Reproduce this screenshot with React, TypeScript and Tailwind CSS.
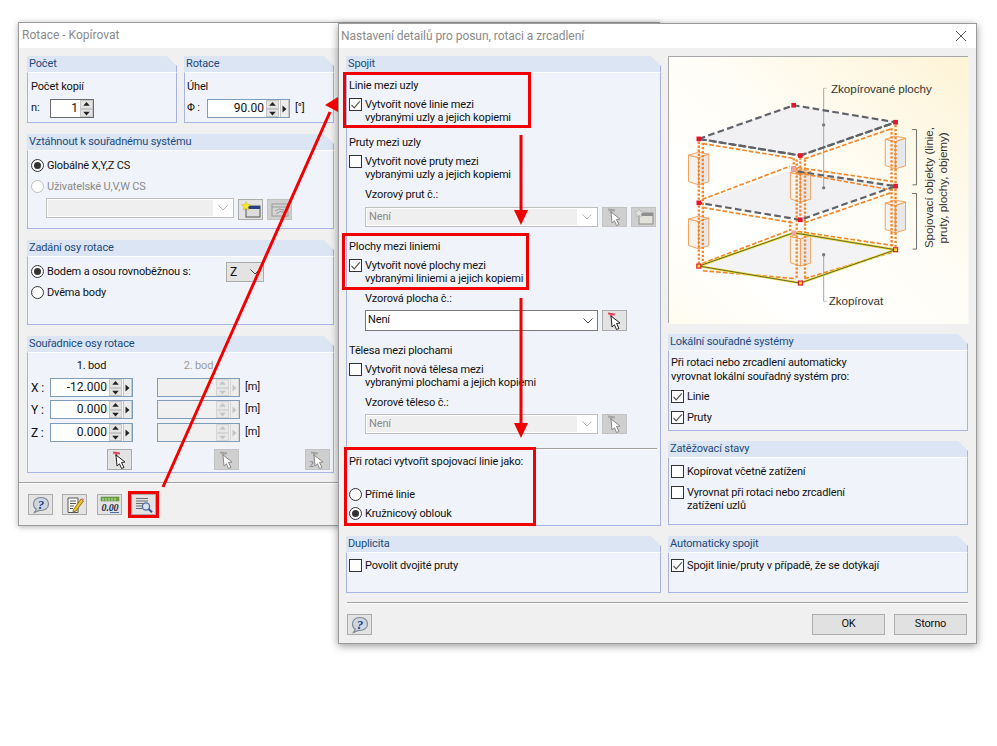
import type { ReactNode } from 'react';

const FONT = 'font-[Roboto,"Liberation_Sans",sans-serif]';

function Group({ title, className, children }: { title: string; className: string; children?: ReactNode }) {
  return (
    <div className={`flex flex-col ${className}`}>
      <div className="h-[16px] shrink-0 border-r border-[#a9b3e2] bg-[#dbe5f3] pl-[2px] leading-[16px] text-[#1c4a7c] [clip-path:polygon(0_0,calc(100%-10px)_0,100%_10px,100%_100%,0_100%)]">
        {title}
      </div>
      <div className="flex-1 border-x border-b border-t border-[#a9b3e2] border-t-white bg-[#f0f4fa]">{children}</div>
    </div>
  );
}

function Check({ on, className = '', children }: { on?: boolean; className?: string; children: ReactNode }) {
  return (
    <div className={`flex items-start gap-[3px] leading-[13px] ${className}`}>
      <span className="flex h-[13px] w-[13px] shrink-0 items-center justify-center border border-[#333] bg-white">
        {on && (
          <svg viewBox="0 0 11 11" className="h-[11px] w-[11px]">
            <path d="M1.5 6 L4.2 8.8 L9.8 2.4" fill="none" stroke="#555" strokeWidth="1.2" />
          </svg>
        )}
      </span>
      <span>{children}</span>
    </div>
  );
}

function Radio({ on, off, className = '', children }: { on?: boolean; off?: boolean; className?: string; children: ReactNode }) {
  return (
    <div className={`flex items-center gap-[3px] leading-[13px] ${off ? 'text-[#8a8a8a]' : ''} ${className}`}>
      <span className={`flex h-[13px] w-[13px] shrink-0 items-center justify-center rounded-full border bg-white ${off ? 'border-[#bdbdbd]' : 'border-[#333]'}`}>
        {on && <span className="h-[7px] w-[7px] rounded-full bg-[#333]" />}
      </span>
      <span>{children}</span>
    </div>
  );
}

function Caret() {
  return (
    <svg viewBox="0 0 10 6" className="h-[6px] w-[10px]">
      <path d="M0.5 0.5 L5 5 L9.5 0.5" fill="none" stroke="currentColor" strokeWidth="1" />
    </svg>
  );
}

function Combo({ value, off, className }: { value?: string; off?: boolean; className: string }) {
  return (
    <div className={`flex items-center border ${off ? 'border-[#bfbfbf] bg-white p-[1px] text-[#8a8a8a]' : 'border-[#7a7a7a] bg-white'} ${className}`}>
      <div className={`flex h-full flex-1 items-center pl-[2px] ${off ? 'bg-[#efefef]' : ''}`}>{value}</div>
      <div className={`flex w-[19px] justify-center ${off ? 'text-[#b5b5b5]' : 'text-[#444]'}`}>
        <Caret />
      </div>
    </div>
  );
}

function Spin({ value, off, dark, arrow = true, className }: { value: string; off?: boolean; dark?: boolean; arrow?: boolean; className: string }) {
  const ink = off ? '#a8a8a8' : '#222';
  return (
    <div className={`flex border ${dark ? 'border-[#6b6b6b]' : 'border-[#7f9db9]'} ${off ? 'bg-[#f0f0f0]' : 'bg-white'} ${className}`}>
      <div className="flex-1 pr-[2px] text-right text-[12px] leading-[17px] tracking-normal">{value}</div>
      <div className={`flex w-[13px] flex-col bg-[#e4e4e4] ${off ? 'opacity-60' : ''}`}>
        <svg viewBox="0 0 13 9" className="flex-1 border border-[#c6c6c6]">
          <path d="M6.5 1.5 L11 6.5 H2 Z" fill={ink} />
        </svg>
        <svg viewBox="0 0 13 9" className="flex-1 border border-[#c6c6c6]">
          <path d="M6.5 7.5 L11 2.5 H2 Z" fill={ink} />
        </svg>
      </div>
      {arrow && (
        <div className={`ml-[1px] flex w-[9px] items-center justify-center border-x border-[#c6c6c6] bg-[#ececec] ${off ? 'opacity-60' : ''}`}>
          <svg viewBox="0 0 5 8" className="h-[8px] w-[5px]">
            <path d="M0.5 0.5 L4.5 4 L0.5 7.5 Z" fill={ink} />
          </svg>
        </div>
      )}
    </div>
  );
}

function IconButton({ off, className = '', children }: { off?: boolean; className?: string; children: ReactNode }) {
  return (
    <div className={`flex h-[21px] w-[25px] shrink-0 items-center justify-center border ${off ? 'border-[#c2c2c2] bg-[#cfcfcf]' : 'border-[#ababab] bg-[#e3e3e3]'} ${className}`}>
      {children}
    </div>
  );
}

function HelpIcon() {
  return (
    <svg viewBox="0 0 20 18" className="h-[18px] w-[20px]">
      <path d="M10 1.5 C5 1.5 2.5 4.5 2.5 8 C2.5 10.5 3.8 12.3 5.5 13.3 L3.5 16.5 L8.5 14.4 C13.5 15 17.5 12.5 17.5 8 C17.5 4.5 15 1.5 10 1.5 Z" fill="#cfd6e0" stroke="#7f8a9a" strokeWidth="1.2" />
      <text x="10" y="13" textAnchor="middle" fontSize="13" fontWeight="700" fontStyle="italic" fontFamily="Liberation Serif, serif" fill="#24407f">?</text>
    </svg>
  );
}

function NoteIcon() {
  return (
    <svg viewBox="0 0 20 18" className="h-[18px] w-[20px]">
      <path d="M3 2 H13 V16.5 H3 Z" fill="#fff" stroke="#555" strokeWidth="1" />
      <path d="M5 5 H11 M5 7.5 H11 M5 10 H9 M5 12.5 H8" stroke="#555" strokeWidth="1" />
      <path d="M8.5 13.5 L16 3 L18.5 5 L11 15 L8 16 Z" fill="#f0c020" stroke="#7a5a10" strokeWidth="0.8" />
      <path d="M16 3 L18.5 5 L19 3.5 L17.5 2 Z" fill="#e8887a" />
    </svg>
  );
}

function DecimalIcon() {
  return (
    <svg viewBox="0 0 22 18" className="h-[18px] w-[22px]">
      <rect x="2" y="1" width="18" height="4" fill="#6ca544" stroke="#4a7d2c" strokeWidth="0.5" />
      <path d="M4 2 V5 M7 2 V5 M10 2 V5 M13 2 V5 M16 2 V5" stroke="#dff0cf" strokeWidth="0.7" />
      <text x="11" y="14.5" textAnchor="middle" fontSize="10" fontWeight="700" fontStyle="italic" fontFamily="Liberation Serif, serif" fill="#1d2f55">0.00</text>
      <path d="M11 16.5 H20" stroke="#4a6ab0" strokeWidth="1" />
    </svg>
  );
}

function DetailIcon() {
  return (
    <svg viewBox="0 0 20 18" className="h-[18px] w-[20px]">
      <path d="M2 2.5 H14 M2 5 H14 M2 7.5 H10 M2 10 H8 M2 12.5 H8" stroke="#6b6b6b" strokeWidth="1" />
      <circle cx="12" cy="10.5" r="3.6" fill="#d8e4f4" stroke="#4f6fae" strokeWidth="1.4" />
      <path d="M14.6 13 L18 16.2" stroke="#33508c" strokeWidth="2" />
    </svg>
  );
}

function PickIcon({ off, two }: { off?: boolean; two?: boolean }) {
  return (
    <svg viewBox="0 0 20 18" className="h-[18px] w-[20px]">
      <path d="M3 1.5 L10 2.5 M5.5 2 L6.5 5" stroke={off ? '#a2a2a2' : '#d9485e'} strokeWidth="2" fill="none" />
      <path d="M6 4 L15 11 L11.5 11.5 L14 16.5 L11.5 17.5 L9.5 12.8 L7 15 Z" fill="#fff" stroke={off ? '#8a8a8a' : '#222'} strokeWidth="1" />
      {two && <text x="3.5" y="15.5" textAnchor="middle" fontSize="9" fontWeight="700" fontFamily="Liberation Serif, serif" fill="#8a8a8a">2</text>}
    </svg>
  );
}

function NewWindowIcon({ off }: { off?: boolean }) {
  return (
    <svg viewBox="0 0 20 18" className="h-[18px] w-[20px]">
      <rect x="5" y="5" width="14" height="11" fill={off ? '#e2e2d8' : '#dcdcdc'} stroke={off ? '#8f8f8f' : '#555'} strokeWidth="1" />
      <rect x="5" y="5" width="14" height="3" fill={off ? '#8f8f8f' : '#27408b'} />
      <path d="M5 0.5 L6.3 3.4 L9.5 3.8 L7 5.9 L7.8 9 L5 7.4 L2.2 9 L3 5.9 L0.5 3.8 L3.7 3.4 Z" fill={off ? '#e4e4e4' : '#f6e82c'} stroke={off ? '#aaa' : '#c9b810'} strokeWidth="0.5" />
    </svg>
  );
}

function HandWindowIcon() {
  return (
    <svg viewBox="0 0 20 18" className="h-[18px] w-[20px]">
      <rect x="2" y="3" width="16" height="12" fill="#d5d5d5" stroke="#9a9a9a" strokeWidth="1" />
      <path d="M2 6 H18 M5 10 L9 8 L14 9 M6 13 L10 10.5 L15 11.5" stroke="#9a9a9a" strokeWidth="1" fill="none" />
    </svg>
  );
}

// one bracing box of the sketch, drawn at its spot on the left and shifted with dx/dy
function Prism({ dx, dy }: { dx: number; dy: number }) {
  return (
    <g transform={`translate(${dx} ${dy})`} stroke="#f0923f" strokeWidth="2.5">
      <path d="M97 320 L128 310 V393 L97 402 Z" fill="#e6e8ec" />
      <path d="M67 313 L97 320 V402 L67 392 Z" fill="#f7f3ee" />
      <path d="M67 313 L98 304 L128 310 L97 320 Z" fill="#f3f3f3" />
    </g>
  );
}

function Sketch() {
  const node = [
    [383, 163], [689, 214], [403, 314], [98, 264],
    [383, 354], [689, 406], [403, 507], [98, 456],
  ];
  const foot = [[98, 646], [403, 697], [689, 597]];
  const dashed = { fill: 'none', stroke: '#f0862a', strokeWidth: 5, strokeDasharray: '14 6' };
  const dotted = { fill: 'none', stroke: '#f0862a', strokeWidth: 7, strokeDasharray: '7 5' };
  const grey = { fill: 'none', stroke: '#5e6268', strokeWidth: 6.5, strokeDasharray: '20 10' };
  return (
    <svg viewBox="10 18 898 802" className="h-[267px] w-[300px]">
      <defs>
        <linearGradient id="wash" x1="1" y1="0" x2="0" y2="1">
          <stop offset="0" stopColor="#fdf3d6" />
          <stop offset="0.45" stopColor="#fffdf6" />
          <stop offset="0.75" stopColor="#ffffff" />
          <stop offset="1" stopColor="#fffcf0" />
        </linearGradient>
      </defs>
      <rect x="10" y="18" width="898" height="802" fill="url(#wash)" />
      <path d="M383 163 L689 214 L403 314 L98 264 Z" fill="#f1f1f3" />
      <path d="M383 354 L689 406 L403 507 L98 456 Z" fill="#f1f1f3" />
      <path d="M383 546 L689 597 L403 697 L98 646 Z" fill="#f3f3f5" />
      <path d="M473 112 V411 M473 612 V752" stroke="#a8a8a8" strokeWidth="3" />
      <path d="M473 112 H482 M473 752 H482" stroke="#a8a8a8" strokeWidth="2" />
      <circle cx="473" cy="222" r="5" fill="#777" />
      <circle cx="473" cy="411" r="5" fill="#777" />
      <circle cx="473" cy="612" r="5" fill="#777" />
      <Prism dx={0} dy={0} />
      <Prism dx={0} dy={192} />
      <Prism dx={591} dy={-48} />
      <Prism dx={591} dy={144} />
      <Prism dx={306} dy={52} />
      <Prism dx={306} dy={244} />
      <path d="M98 272 V640 M110 276 V634 M677 232 V590 M689 222 V590 M392 326 V682 M417 326 V682 M403 320 V500 M372 510 V542 M383 322 V348" {...dotted} />
      <path d="M110 278 L380 322 M415 324 L680 232 M108 446 L372 346 M395 350 L680 392 M395 366 L680 418 M110 470 L380 516 M415 516 L680 424 M108 638 L372 538 M395 542 L680 584 M110 660 L390 684 M415 684 L680 604" {...dashed} />
      <path d="M98 264 L383 163 L689 214 L403 314 Z" {...grey} />
      <path d="M98 264 L403 314 M403 314 L689 214" {...grey} />
      <path d="M395 362 L689 406 L403 507 L98 456" {...grey} />
      <path d="M98 646 L383 546 L689 597 L403 697 Z" fill="none" stroke="#e9dc2e" strokeWidth="7" />
      <path d="M98 646 L383 546 L689 597 L403 697 Z" fill="none" stroke="#4a4a3a" strokeWidth="2.5" />
      {node.map(([x, y]) => (
        <rect key={`${x}-${y}`} x={x - 7} y={y - 7} width="14" height="14" fill="#e1152c" />
      ))}
      <rect x="376" y="347" width="14" height="14" fill="#f0a6a0" />
      <rect x="376" y="539" width="14" height="14" fill="#f0a6a0" />
      {foot.map(([x, y]) => (
        <rect key={`${x}-${y}`} x={x - 6} y={y - 6} width="12" height="12" fill="#f6e82c" stroke="#e1152c" strokeWidth="3.5" />
      ))}
      <path d="M738 236 H752 V402 H740 M738 428 H752 V595 H740" fill="none" stroke="#555" strokeWidth="2.5" />
      <g fontFamily="Liberation Sans, sans-serif" fontSize="35" fill="#333">
        <text x="495" y="126">Zkopírované plochy</text>
        <text x="488" y="764">Zkopírovat</text>
        <text transform="translate(800 592) rotate(-90)">Spojovací objekty (linie,</text>
        <text transform="translate(843 578) rotate(-90)">pruty, plochy, objemy)</text>
      </g>
    </svg>
  );
}

function RotationWindow() {
  return (
    <div className="absolute left-[18px] top-[22px] h-[504px] w-[642px] border border-[#9a9a9a] bg-[#f0f0f0] shadow-[0_1px_6px_rgba(0,0,0,0.3)]">
      <div className="h-[25px] bg-white pl-[3px] text-[12px] leading-[25px] tracking-normal text-[#8a8a8a]">Rotace - Kopírovat</div>
      <div className="w-[321px] pl-[8px] pt-[8px]">
        <div className="flex gap-[7px]">
          <Group title="Počet" className="h-[67px] w-[150px]">
            <div className="pl-[3px] pt-[7px] leading-[14px]">Počet kopií</div>
            <div className="mt-[5px] flex items-center pl-[3px]">
              <span className="w-[19px]">n:</span>
              <Spin value="1" dark arrow={false} className="h-[19px] w-[44px]" />
            </div>
          </Group>
          <Group title="Rotace" className="h-[67px] w-[150px]">
            <div className="pl-[2px] pt-[7px] leading-[14px]">Úhel</div>
            <div className="mt-[5px] flex items-center pl-[2px]">
              <span className="w-[20px]">Φ :</span>
              <Spin value="90.00" className="h-[19px] w-[83px]" />
              <span className="ml-[5px]">[°]</span>
            </div>
          </Group>
        </div>
        <Group title="Vztáhnout k souřadnému systému" className="mt-[11px] h-[95px] w-[307px]">
          <Radio on className="ml-[3px] mt-[8px]">Globálně X,Y,Z CS</Radio>
          <Radio off className="ml-[3px] mt-[8px]">Uživatelské U,V,W CS</Radio>
          <div className="ml-[18px] mt-[5px] flex items-start gap-[4px]">
            <Combo off className="h-[20px] w-[188px]" />
            <IconButton className="mt-[1px]"><NewWindowIcon /></IconButton>
            <IconButton off className="mt-[1px]"><HandWindowIcon /></IconButton>
          </div>
        </Group>
        <Group title="Zadání osy rotace" className="mt-[11px] h-[85px] w-[307px]">
          <div className="relative">
            <Radio on className="ml-[3px] pt-[8px]">Bodem a osou rovnoběžnou s:</Radio>
            <div className="absolute left-[198px] top-[5px] flex h-[20px] w-[38px] items-center border border-[#ababab] bg-[#e3e3e3] pl-[3px] text-[12px]">
              <span className="flex-1">Z</span>
              <span className="pr-[3px] text-[#444]"><Caret /></span>
            </div>
          </div>
          <Radio className="ml-[3px] mt-[8px]">Dvěma body</Radio>
        </Group>
        <Group title="Souřadnice osy rotace" className="mt-[11px] h-[137px] w-[307px]">
          <div className="flex pt-[6px] leading-[14px]">
            <span className="ml-[22px] w-[83px] text-center">1. bod</span>
            <span className="ml-[24px] w-[83px] text-center text-[#9a9a9a]">2. bod</span>
          </div>
          {[
            ['X :', '-12.000', 'mt-[5px]'],
            ['Y :', '0.000', 'mt-[3px]'],
            ['Z :', '0.000', 'mt-[4px]'],
          ].map(([axis, value, gap]) => (
            <div key={axis} className={`flex items-center pl-[3px] ${gap}`}>
              <span className="w-[19px] text-[12px]">{axis}</span>
              <Spin value={value} className="h-[19px] w-[83px]" />
              <Spin value="" off className="ml-[24px] h-[19px] w-[83px]" />
              <span className="ml-[5px]">[m]</span>
            </div>
          ))}
          <div className="ml-[79px] mt-[7px] flex">
            <IconButton><PickIcon /></IconButton>
            <IconButton off className="ml-[82px]"><PickIcon off /></IconButton>
            <IconButton off className="ml-[66px]"><PickIcon off two /></IconButton>
          </div>
        </Group>
        <div className="-ml-[8px] mt-[9px] h-[2px] w-[322px] border-t border-[#a0a0a0] bg-white" />
        <div className="mt-[10px] flex pl-[1px]">
          <IconButton><HelpIcon /></IconButton>
          <IconButton className="ml-[9px]"><NoteIcon /></IconButton>
          <IconButton className="ml-[10px]"><DecimalIcon /></IconButton>
          <IconButton className="ml-[9px]"><DetailIcon /></IconButton>
        </div>
      </div>
    </div>
  );
}

function SettingsWindow() {
  return (
    <div className="absolute left-[338px] top-[23px] h-[621px] w-[639px] border border-[#9a9a9a] bg-[#f0f0f0] shadow-[0_2px_8px_rgba(0,0,0,0.4)]">
      <div className="flex h-[24px] items-center justify-between bg-white pl-[2px] pr-[9px] text-[12px] tracking-[-0.05px] text-[#8a8a8a]">
        <span>Nastavení detailů pro posun, rotaci a zrcadlení</span>
        <svg viewBox="0 0 12 12" className="h-[12px] w-[12px]">
          <path d="M1 1 L11 11 M11 1 L1 11" stroke="#555" strokeWidth="1" />
        </svg>
      </div>
      <div className="flex gap-[7px] pl-[7px] pt-[8px]">
        <div className="w-[315px]">
          <Group title="Spojit" className="h-[470px]">
            <div className="pl-[2px]">
              <div className="mt-[6px] leading-[14px]">Linie mezi uzly</div>
              <Check on className="mt-[5px]">Vytvořit nové linie mezi<br />vybranými uzly a jejich kopiemi</Check>
              <div className="mt-[12px] leading-[14px]">Pruty mezi uzly</div>
              <Check className="mt-[5px]">Vytvořit nové pruty mezi<br />vybranými uzly a jejich kopiemi</Check>
              <div className="ml-[16px] mt-[7px] leading-[14px]">Vzorový prut č.:</div>
              <div className="ml-[16px] mt-[5px] flex gap-[4px]">
                <Combo off value="Není" className="h-[20px] w-[233px]" />
                <IconButton off className="!h-[20px]"><PickIcon off /></IconButton>
                <IconButton off className="!h-[20px]"><NewWindowIcon off /></IconButton>
              </div>
              <div className="mt-[13px] leading-[14px]">Plochy mezi liniemi</div>
              <Check on className="mt-[5px]">Vytvořit nové plochy mezi<br />vybranými liniemi a jejich kopiemi</Check>
              <div className="ml-[16px] mt-[7px] leading-[14px]">Vzorová plocha č.:</div>
              <div className="ml-[16px] mt-[4px] flex gap-[4px]">
                <Combo value="Není" className="h-[21px] w-[233px]" />
                <IconButton><PickIcon /></IconButton>
              </div>
              <div className="mt-[13px] leading-[14px]">Tělesa mezi plochami</div>
              <Check className="mt-[5px]">Vytvořit nová tělesa mezi<br />vybranými plochami a jejich kopiemi</Check>
              <div className="ml-[16px] mt-[7px] leading-[14px]">Vzorové těleso č.:</div>
              <div className="ml-[16px] mt-[4px] flex gap-[4px]">
                <Combo off value="Není" className="h-[20px] w-[233px]" />
                <IconButton off className="!h-[20px]"><PickIcon off /></IconButton>
              </div>
            </div>
            <div className="ml-[1px] mt-[14px] h-[2px] w-[309px] border-t border-[#a0a0a0] bg-white" />
            <div className="pl-[2px]">
              <div className="mt-[5px] leading-[14px]">Při rotaci vytvořit spojovací linie jako:</div>
              <Radio className="mt-[19px]">Přímé linie</Radio>
              <Radio on className="mt-[6px]">Kružnicový oblouk</Radio>
            </div>
          </Group>
          <Group title="Duplicita" className="mt-[10px] h-[57px]">
            <Check className="ml-[2px] mt-[6px]">Povolit dvojité pruty</Check>
          </Group>
        </div>
        <div className="w-[300px]">
          <div className="h-[267px] border-l border-t border-[#a8a8a8] bg-white">
            <Sketch />
          </div>
          <Group title="Lokální souřadné systémy" className="mt-[11px] h-[97px]">
            <div className="ml-[2px] mt-[5px] leading-[14px]">Při rotaci nebo zrcadlení automaticky<br />vyrovnat lokální souřadný systém pro:</div>
            <Check on className="ml-[2px] mt-[6px]">Linie</Check>
            <Check on className="ml-[2px] mt-[8px]">Pruty</Check>
          </Group>
          <Group title="Zatěžovací stavy" className="mt-[10px] h-[84px]">
            <Check className="ml-[2px] mt-[7px]">Kopírovat včetně zatížení</Check>
            <Check className="ml-[2px] mt-[8px]">Vyrovnat při rotaci nebo zrcadlení<br />zatížení uzlů</Check>
          </Group>
          <Group title="Automaticky spojit" className="mt-[11px] h-[57px]">
            <Check on className="ml-[2px] mt-[6px]">Spojit linie/pruty v případě, že se dotýkají</Check>
          </Group>
        </div>
      </div>
      <div className="ml-[8px] mt-[9px] h-[2px] w-[621px] border-t border-[#a0a0a0] bg-white" />
      <div className="mt-[10px] flex pl-[8px] pr-[9px]">
        <IconButton><HelpIcon /></IconButton>
        <div className="flex-1" />
        <div className="flex h-[21px] w-[73px] items-center justify-center border border-[#adadad] bg-[#e1e1e1]">OK</div>
        <div className="ml-[9px] flex h-[21px] w-[73px] items-center justify-center border border-[#adadad] bg-[#e1e1e1]">Storno</div>
      </div>
    </div>
  );
}

// red annotations drawn on top of both dialogs
function Markup() {
  return (
    <>
      <div className="absolute left-[343px] top-[72px] h-[56px] w-[188px] border-[3px] border-[#f00000]" />
      <div className="absolute left-[342px] top-[233px] h-[57px] w-[187px] border-[3px] border-[#f00000]" />
      <div className="absolute left-[344px] top-[447px] h-[79px] w-[192px] border-[3px] border-[#f00000]" />
      <div className="absolute left-[128px] top-[491px] h-[27px] w-[31px] border-[3px] border-[#f00000]" />
      <svg viewBox="0 0 997 746" className="pointer-events-none absolute left-0 top-0 h-[746px] w-[997px]">
        <path d="M163 487 L330 112" stroke="#f00000" strokeWidth="3" />
        <path d="M338 97 L325 105 L338 112 Z" fill="#f00000" />
        <path d="M521 135 V212" stroke="#f00000" strokeWidth="3" />
        <path d="M514 210 H528 L521 225 Z" fill="#f00000" />
        <path d="M521 298 V425" stroke="#f00000" strokeWidth="3" />
        <path d="M514 423 H528 L521 438 Z" fill="#f00000" />
      </svg>
    </>
  );
}

export default function App() {
  return (
    <div className={`relative h-[746px] w-[997px] overflow-hidden bg-white text-[11px] tracking-[-0.15px] text-[#111] ${FONT}`}>
      <RotationWindow />
      <SettingsWindow />
      <Markup />
    </div>
  );
}
